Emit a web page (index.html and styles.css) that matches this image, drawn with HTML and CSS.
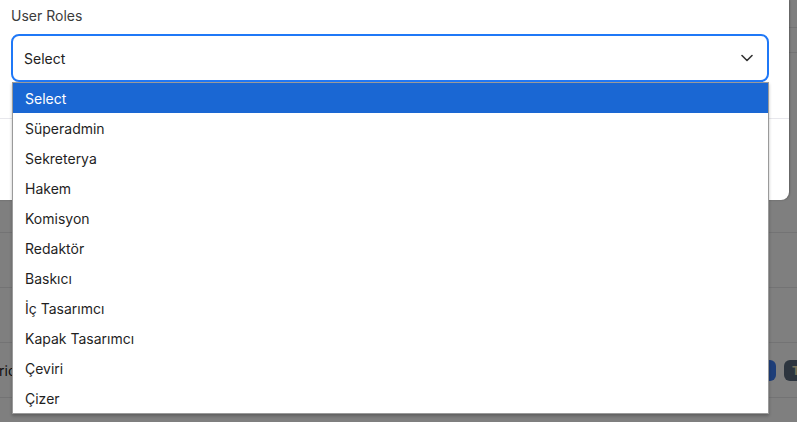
FILE: index.html
```html
<!DOCTYPE html>
<html lang="tr">
<head>
<meta charset="utf-8">
<title>User Roles</title>
<link rel="stylesheet" href="styles.css">
</head>
<body>
<div class="page">
  <div class="topbar"></div>
  <div class="subbar"></div>
  <div class="spacer"></div>
  <div class="row"></div>
  <div class="row"></div>
  <div class="row row-data">
    <span class="cell-text">ric</span>
    <div class="badges">
      <span class="badge badge-blue"></span>
      <span class="badge badge-dark">T</span>
    </div>
  </div>
  <div class="row row-last"></div>
</div>
<div class="backdrop"></div>
<div class="modal">
  <div class="modal-body">
    <label class="field-label">User Roles</label>
    <div class="select-wrap">
      <div class="select-box">
        <span class="select-value">Select</span>
        <svg class="chevron" width="12" height="8" viewBox="0 0 12 8"><path d="M1 1.5 L6 6.5 L11 1.5" fill="none" stroke="#333" stroke-width="1.6" stroke-linecap="round" stroke-linejoin="round"/></svg>
      </div>
      <ul class="listbox">
        <li class="option selected">Select</li>
        <li class="option">Süperadmin</li>
        <li class="option">Sekreterya</li>
        <li class="option">Hakem</li>
        <li class="option">Komisyon</li>
        <li class="option">Redaktör</li>
        <li class="option">Baskıcı</li>
        <li class="option">İç Tasarımcı</li>
        <li class="option">Kapak Tasarımcı</li>
        <li class="option">Çeviri</li>
        <li class="option">Çizer</li>
      </ul>
    </div>
  </div>
  <div class="modal-footer"></div>
</div>
</body>
</html>
```
FILE: styles.css
```css
* { box-sizing: border-box; }
html, body {
  margin: 0;
  padding: 0;
}
body {
  width: 797px;
  height: 422px;
  overflow: hidden;
  position: relative;
  font-family: Inter, "Liberation Sans", sans-serif;
  background: #fff;
}
.page {
  background: #fff;
}
.topbar {
  height: 28px;
  border-bottom: 1px solid #e6e6e8;
}
.subbar {
  height: 25px;
  border-bottom: 1px solid #e6e6e8;
}
.spacer {
  height: 180px;
  border-bottom: 1px solid #e6e6e8;
}
.row {
  height: 55px;
  border-bottom: 1px solid #e6e6e8;
  display: flex;
  align-items: center;
}
.row-last {
  height: 24px;
  border-bottom: 0;
}
.cell-text {
  font-size: 14px;
  color: #222;
  margin-left: -1px;
}
.badges {
  margin-left: auto;
  margin-right: -26px;
  display: flex;
  gap: 8px;
}
.badge {
  height: 21px;
  border-radius: 6px;
  font-size: 12px;
  font-weight: 700;
  line-height: 21px;
  padding: 0 8px;
}
.badge-blue {
  width: 40px;
  background: #3d7cf2;
}
.badge-dark {
  width: 39px;
  background: #5a6b7e;
  color: #f6e8b8;
}
.backdrop {
  position: absolute;
  inset: 0;
  background: rgba(0, 0, 0, 0.5);
}
.modal {
  position: absolute;
  top: 0;
  left: -20px;
  width: 809px;
  height: 200px;
  background: #fff;
  border-radius: 0 0 8px 8px;
  box-shadow: 1px 0 2px rgba(0, 0, 0, 0.25);
}
.modal-body {
  padding: 6px 20px 36px 31px;
  border-bottom: 1px solid #e7e7ec;
}
.field-label {
  display: block;
  font-size: 14px;
  line-height: 20px;
  color: #3b3b3b;
  margin-bottom: 8px;
}
.select-wrap {
  position: relative;
  width: 758px;
}
.select-box {
  height: 48px;
  border: 2px solid #1f78f7;
  border-radius: 8px;
  display: flex;
  align-items: center;
  justify-content: space-between;
  padding: 0 14px 0 11px;
}
.select-value {
  font-size: 14px;
  color: #222;
}
.listbox {
  position: absolute;
  top: 100%;
  left: 1px;
  right: 0;
  margin: 0;
  padding: 0;
  list-style: none;
  background: #fff;
  border: 1px solid #9a9a9a;
  box-shadow: 0 2px 3px rgba(0, 0, 0, 0.25);
}
.option {
  height: 30px;
  line-height: 28px;
  padding: 2px 0 0 12px;
  font-size: 14px;
  color: #1f1f1f;
}
.option.selected {
  background: #1a67d3;
  color: #fff;
}
```
